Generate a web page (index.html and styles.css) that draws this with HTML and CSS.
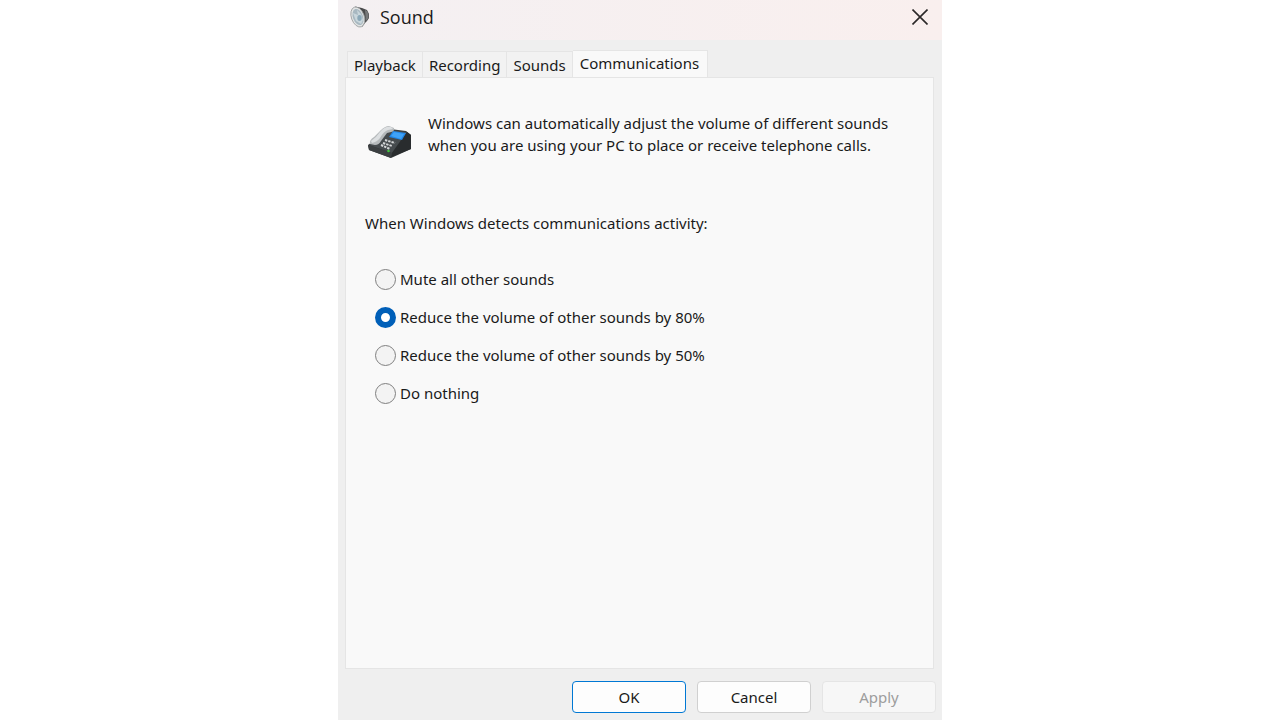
FILE: index.html
```html
<!DOCTYPE html>
<html lang="en">
<head>
    <meta charset="UTF-8">
    <meta name="viewport" content="width=device-width, initial-scale=1.0">
    <title>Sound</title>
    <link rel="stylesheet" href="styles.css">
</head>
<body>
<form class="dialog">

  <!-- Title bar -->
  <header class="title-bar">
    <svg class="speaker-icon" width="22" height="22" viewBox="0 0 22 22" aria-hidden="true">
      <path d="M5 0.5 L12 2 L17 4 L19 8 V12 L17 15 L15 17 L12 21 Z" fill="#4a4b4c"/>
      <path d="M15 4 L17 5 L18.500 8 V12 L16 15 Z" fill="#77797a"/>
      <ellipse cx="7.800" cy="11" rx="6.400" ry="10.400" transform="rotate(-20 7.8 11)" fill="#e2e4e4" stroke="#9b9fa0" stroke-width="0.8"/>
      <ellipse cx="8" cy="11" rx="5" ry="8.400" transform="rotate(-20 8 11)" fill="#a8b8c1"/>
      <path d="M3 7 L8 9 L7 4 L11 8 L13 14 L11 18 L6 15 Z" fill="#c9d6dc"/>
      <ellipse cx="9.500" cy="12" rx="2.200" ry="3" fill="#8ba8b8"/>
    </svg>
    <h1 class="title">Sound</h1>
    <button type="button" class="close-button" aria-label="Close">
      <svg width="16" height="16" viewBox="0 0 16 16" aria-hidden="true">
        <path d="M0.5 0.5 L15.5 15.5 M15.5 0.5 L0.5 15.5" fill="none" stroke="#2b2828" stroke-width="1.6"/>
      </svg>
    </button>
  </header>

  <!-- Tabs -->
  <div class="tabs" role="tablist">
    <button type="button" class="tab" role="tab" aria-selected="false">Playback</button>
    <button type="button" class="tab" role="tab" aria-selected="false">Recording</button>
    <button type="button" class="tab" role="tab" aria-selected="false">Sounds</button>
    <button type="button" class="tab active" role="tab" aria-selected="true">Communications</button>
  </div>

  <!-- Communications page -->
  <main class="panel" role="tabpanel">
    <div class="intro">
      <svg class="phone-icon" width="44" height="34" viewBox="0 0 44 34" aria-hidden="true">
        <path d="M0 20 L22 4 L38 6 L43 10 V24 L23 33 L1 25 Z" fill="#34383a"/>
        <path d="M1 20 L22 5 L39 7 L24 28 Z" fill="#464b4e"/>
        <path d="M24 28 L39 7 L43 10 V24 L23 32 Z" fill="#292c2e"/>
        <path d="M0 20 L24 28 L23 33 L1 25 Z" fill="#3b3f41"/>
        <path d="M25 6 L38 8 L34 15 L21 12 Z" fill="#2187e8"/>
        <path d="M26 7 L36 9 L33 14 L23 11 Z" fill="#3fa2f7"/>
        <path d="M17 15 L27 18 M15 18 L24 21 M13 20 L22 24" stroke="#d4d6d7" stroke-width="2" stroke-dasharray="2.4 1" fill="none"/>
        <path d="M2 19 Q1 15 6 12 L12 6 Q17 1 21 1 L26 3 Q27 6 23 7 L19 8 L13 16 Q11 20 7 20 Z" fill="#b6babc"/>
        <path d="M3 16 Q8 13 12 7 Q17 1 23 2 L25 4 L20 5 Q16 6 12 13 Q9 17 4 18 Z" fill="#dcdfe1"/>
        <circle cx="20.500" cy="26" r="1.300" fill="#42c53e"/>
      </svg>
      <p class="intro-text">Windows can automatically adjust the volume of different sounds when you are using your PC to place or receive telephone calls.</p>
    </div>

    <fieldset class="options">
      <legend class="options-heading">When Windows detects communications activity:</legend>
      <label class="option"><input type="radio" class="radio" name="activity" value="mute">Mute all other sounds</label>
      <label class="option"><input type="radio" class="radio" name="activity" value="80" checked>Reduce the volume of other sounds by 80%</label>
      <label class="option"><input type="radio" class="radio" name="activity" value="50">Reduce the volume of other sounds by 50%</label>
      <label class="option"><input type="radio" class="radio" name="activity" value="none">Do nothing</label>
    </fieldset>
  </main>

  <!-- Dialog buttons -->
  <footer class="actions">
    <button type="submit" class="btn btn-default">OK</button>
    <button type="button" class="btn">Cancel</button>
    <button type="button" class="btn" disabled>Apply</button>
  </footer>

</form>
</body>
</html>
```
FILE: styles.css
```css
:root {
    --text-color: #1a1a1a;
    --dialog-color: #efefef;
    --panel-color: #f9f9f9;
    --line-color: #e5e5e5;
    --accent-color: #005fb8;
}

* {
    box-sizing: border-box;
}

body {
    margin: 0;
    background-color: #ffffff;
    color: var(--text-color);
    font-family: "Noto Sans", "Open Sans", sans-serif;
    font-size: 15px;
    line-height: 22px;
}

button {
    font-family: inherit;
    font-size: 15px;
    line-height: 22px;
    color: inherit;
}

.dialog {
    display: flex;
    flex-direction: column;
    max-width: 604px;
    min-height: 100vh;
    margin: 0 auto;
    background-color: var(--dialog-color);
}

/* Title bar */
.title-bar {
    display: flex;
    align-items: center;
    height: 40px;
    padding: 0 14px 6px 12px;
    background: linear-gradient(to right, #f4f0f2, #f9efee);
}

.title {
    flex: 1;
    margin: 0 0 0 8px;
    font-family: "Open Sans", sans-serif;
    font-size: 18px;
    font-weight: normal;
}

.close-button {
    display: flex;
    padding: 0;
    border: none;
    background: none;
}

/* Tabs */
.tabs {
    display: flex;
    align-items: flex-end;
    padding: 10px 9px 0;
}

.tab {
    height: 26px;
    padding: 0 6px;
    border: 1px solid var(--line-color);
    border-width: 1px 1px 0 0;
    background-color: #f2f2f2;
}

.tab:first-child {
    border-left-width: 1px;
}

.tab.active {
    height: 28px;
    margin-bottom: -1px;
    padding: 0 8px 4px 7px;
    background-color: var(--panel-color);
}

/* Tab page */
.panel {
    flex: 1;
    margin: 0 8px 0 7px;
    padding: 34px 19px;
    border: 1px solid var(--line-color);
    background-color: var(--panel-color);
}

.intro {
    display: flex;
    align-items: center;
    gap: 16px;
    padding: 0 12px 0 3px;
}

.phone-icon {
    flex: none;
    margin-top: 10px;
}

.intro-text {
    margin: 0 0 6px;
}

.options {
    margin: 50px 0 0;
    padding: 0;
    border: none;
}

.options-heading {
    margin-bottom: 34px;
    padding: 0;
}

.option {
    display: flex;
    align-items: center;
    gap: 4px;
    width: fit-content;
    margin: 0 0 16px 10px;
}

.radio {
    appearance: none;
    width: 21px;
    height: 21px;
    margin: 0;
    border: 1px solid #808080;
    border-radius: 50%;
    background-color: #f3f3f3;
}

.radio:checked {
    border: 6px solid var(--accent-color);
    background-color: #ffffff;
}

/* Dialog buttons */
.actions {
    display: flex;
    justify-content: flex-end;
    gap: 11px;
    padding: 12px 6px 7px;
}

.btn {
    width: 114px;
    height: 32px;
    padding: 0;
    border: 1px solid #d0d0d0;
    border-radius: 4px;
    background-color: #fdfdfd;
}

.btn-default {
    border-color: #0078d4;
}

.btn:disabled {
    border-color: var(--line-color);
    background-color: #f7f7f7;
    color: #9d9d9d;
}
```
